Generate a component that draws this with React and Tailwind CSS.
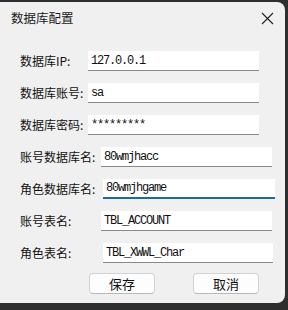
import React from 'react'

const ROWS = [
  { label: '数据库IP:', value: '127.0.0.1', lw: 'w-[68px]', iw: 'w-[171px]' },
  { label: '数据库账号:', value: 'sa', lw: 'w-[68px]', iw: 'w-[171px]' },
  { label: '数据库密码:', value: '*********', lw: 'w-[68px]', iw: 'w-[171px]' },
  { label: '账号数据库名:', value: '80wmjhacc', lw: 'w-[81px]', iw: 'w-[171px]' },
  { label: '角色数据库名:', value: '80wmjhgame', lw: 'w-[83px]', iw: 'w-[172px]', focus: true },
  { label: '账号表名:', value: 'TBL_ACCOUNT', lw: 'w-[81px]', iw: 'w-[171px]' },
  { label: '角色表名:', value: 'TBL_XWWL_Char', lw: 'w-[83px]', iw: 'w-[170px]' },
]

const cjk = { fontFamily: '"Noto Sans CJK SC", "Noto Sans", sans-serif' }
const mono = { fontFamily: '"Liberation Mono", "Noto Sans CJK SC", monospace' }

export default function App() {
  return (
    <div className="w-[288px] h-[310px] bg-[#2e2e2e] overflow-hidden pt-[2px]" style={cjk}>
      <div className="w-[285px] h-[301px] bg-[#f0f0f0] rounded-r-[8px] flex flex-col">
        <div className="h-[32px] flex items-center justify-between pl-[11px] pr-[11px]">
          <span className="text-[12.5px] text-[#1a1a1a] leading-none">数据库配置</span>
          <svg width="13" height="13" viewBox="0 0 13 13" className="text-[#222]">
            <path d="M1 1 L12 12 M12 1 L1 12" stroke="currentColor" strokeWidth="1.1" />
          </svg>
        </div>
        <div className="flex flex-col gap-[12px] pt-[17px] pl-[20px]">
          {ROWS.map((r) => (
            <div key={r.label} className="flex items-center h-[20px]">
              <span className={`${r.lw} shrink-0 whitespace-nowrap text-[12px] text-[#111] leading-none`}>{r.label}</span>
              <div
                className={`${r.iw} h-[20px] bg-white flex items-center pl-[3px] text-[12px] text-[#111] tracking-[-1.2px] ${
                  r.focus ? 'border-b-2 border-[#1d6a9c]' : 'border-b border-[#8a8a8a]'
                }`}
                style={mono}
              >
                {r.value}
              </div>
            </div>
          ))}
        </div>
        <div className="flex gap-[38px] pl-[89px] mt-[10px]">
          <button className="w-[66px] h-[21px] bg-[#fdfdfd] border border-[#d2d2d2] border-b-[#b8b8b8] rounded-[4px] text-[13px] text-[#111] leading-none">保存</button>
          <button className="w-[66px] h-[21px] bg-[#fdfdfd] border border-[#d2d2d2] border-b-[#b8b8b8] rounded-[4px] text-[13px] text-[#111] leading-none">取消</button>
        </div>
      </div>
    </div>
  )
}
